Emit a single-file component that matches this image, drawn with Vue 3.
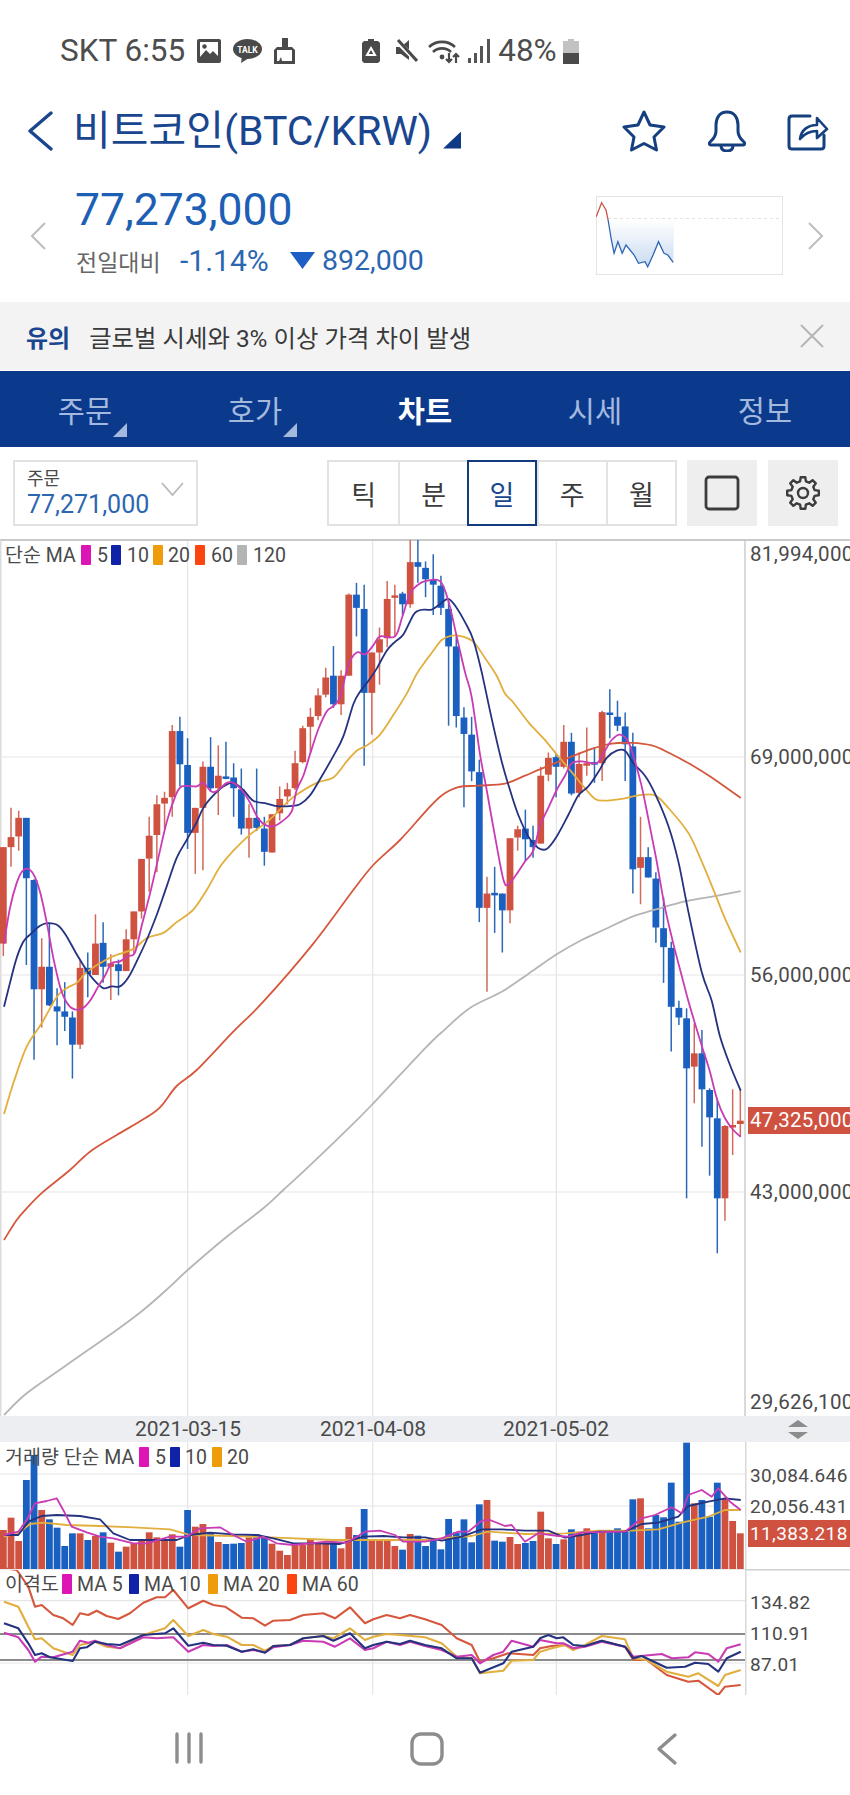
<script setup>
const mainY = (y) => 540 + y / 2.8
const lowY = (y) => 1400 + y / 3

// candles: wick top, body top, body bottom, wick bottom, colour
const candlesA = [
  [860,860,1130,1165,'r'],[750,832,860,915,'r'],[758,778,830,870,'r'],[778,778,947,1190,'b'],[950,952,1258,1455,'b'],
  [1115,1195,1258,1365,'r'],[1075,1195,1303,1305,'b'],[1255,1306,1320,1415,'b'],[1238,1320,1335,1375,'b'],[1320,1337,1413,1508,'b'],
  [1175,1198,1413,1425,'r'],[1155,1198,1215,1280,'b'],[1048,1130,1218,1218,'r'],[1070,1128,1195,1240,'b'],[1160,1185,1195,1288,'r'],
  [1175,1188,1207,1275,'b'],[1090,1118,1207,1207,'r'],[1040,1040,1118,1160,'r'],[893,893,1040,1060,'r'],[775,828,892,985,'r'],
  [715,740,826,930,'r'],[705,722,738,810,'r'],[518,535,720,775,'r'],[495,535,628,690,'b'],[555,630,820,865,'b'],
  [750,750,820,935,'r'],[620,635,750,925,'r'],[552,635,695,705,'b'],[575,660,695,770,'r'],[565,662,668,670,'b'],
  [625,665,695,775,'b'],[640,698,808,825,'b'],[740,778,808,890,'r'],[640,778,806,815,'b'],[775,808,873,912,'b'],
  [768,768,875,875,'r'],[690,725,765,785,'r'],[680,698,718,740,'r'],[590,625,695,700,'r'],[520,527,622,625,'r'],
  [470,495,523,595,'r'],[415,435,493,505,'r'],[358,385,433,440,'r'],[297,380,460,470,'b'],[365,380,460,490,'r'],
  [150,153,380,380,'r'],[120,153,190,270,'b'],[125,193,428,632,'b'],[315,315,428,545,'r'],[245,278,315,405,'r'],
  [115,165,275,300,'r'],[125,155,160,270,'r'],[145,150,180,210,'b'],[0,62,180,190,'r'],[0,62,75,120,'b'],
  [60,78,110,160,'b'],[40,112,125,210,'b'],[100,128,190,210,'b'],[170,193,298,520,'b'],[270,298,493,525,'b'],
  [468,497,543,748,'b'],[495,545,648,675,'b'],[615,650,1030,1070,'b'],[943,990,1030,1265,'r'],[915,988,991,1100,'b'],
  [990,990,1037,1155,'b'],[835,835,1037,1073,'r'],[800,810,833,870,'r'],[755,808,838,900,'b'],[800,840,860,890,'b'],
  [635,660,850,850,'r'],[595,610,657,675,'r'],[598,608,635,720,'b'],[518,565,635,640,'r'],[540,565,710,715,'b'],
  [595,627,708,720,'r'],[525,625,628,660,'r'],[580,622,628,680,'b'],[478,482,625,675,'r'],[418,483,488,555,'b'],
  [450,495,520,535,'b'],[483,522,572,675,'b'],[540,578,922,990,'b'],[775,888,918,1020,'r'],[860,888,945,945,'b'],
  [930,948,1085,1128,'b'],[1000,1087,1140,1240,'b'],[1125,1142,1307,1432,'b'],[1290,1310,1337,1358,'b'],
]
const candlesB = [
  [25,55,205,595,'b'],[70,160,200,310,'r'],[90,160,268,440,'b'],[265,270,352,527,'b'],[295,355,595,760,'b'],
  [375,378,595,662,'r'],[268,375,380,465,'r'],[270,362,372,410,'r'],
]
const bandX = (i) => 3.33 + i * 7.677
const candles = [
  ...candlesA.map((c) => ({ y: c.slice(0, 4).map(mainY), c: c[4] })),
  ...candlesB.map((c) => ({ y: c.slice(0, 4).map((v) => 1000 + v / 3), c: c[4] })),
].map((k, i) => ({
  x: bandX(i),
  wt: k.y[0],
  bt: k.y[1],
  bh: Math.max(k.y[2] - k.y[1], 2.5),
  wb: k.y[3],
  cls: k.c === 'r' ? 'up' : 'down',
}))

// volume bars: top in zoomed coordinates
const volumes = [
  [390,'r'],[353,'r'],[423,'r'],[240,'b'],[165,'b'],[330,'r'],[358,'b'],[383,'b'],[438,'b'],[400,'b'],[400,'r'],[420,'b'],[408,'r'],[397,'b'],
  [428,'r'],[455,'b'],[440,'r'],[430,'r'],[420,'r'],[397,'r'],[412,'r'],[417,'r'],[403,'r'],[440,'b'],[330,'b'],[380,'r'],[372,'r'],[397,'b'],
  [426,'r'],[432,'b'],[431,'b'],[429,'b'],[412,'r'],[403,'b'],[410,'b'],[431,'r'],[452,'r'],[465,'r'],[433,'r'],[435,'r'],[417,'r'],[429,'r'],
  [427,'r'],[425,'b'],[445,'r'],[381,'r'],[405,'b'],[327,'b'],[420,'r'],[420,'r'],[420,'r'],[438,'r'],[449,'b'],[402,'r'],[407,'b'],
  [438,'b'],[420,'b'],[448,'b'],[357,'b'],[397,'b'],[358,'b'],[427,'b'],[313,'b'],[300,'r'],[422,'b'],[425,'b'],[411,'r'],[432,'r'],[429,'b'],
  [423,'b'],[335,'r'],[415,'r'],[432,'b'],[418,'r'],[388,'b'],[395,'r'],[385,'r'],[395,'b'],[390,'r'],[390,'b'],[385,'b'],[395,'b'],[298,'b'],
  [295,'r'],[385,'b'],[345,'b'],[352,'b'],[248,'b'],[365,'b'],[128,'b'],[310,'r'],[300,'b'],[350,'b'],[248,'b'],[297,'r'],[363,'r'],[400,'r'],
].map((v, i) => ({ x: bandX(i) - 3.4, y: lowY(v[0]), h: 1569 - lowY(v[0]), cls: v[1] === 'r' ? 'up' : 'down' }))

const smooth = (p) => {
  let d = `M${p[0][0].toFixed(1)} ${p[0][1].toFixed(1)}`
  for (let i = 0; i < p.length - 1; i++) {
    const a = p[i - 1] || p[i], b = p[i], c = p[i + 1], e = p[i + 2] || c
    const c1x = b[0] + (c[0] - a[0]) / 6, c1y = b[1] + (c[1] - a[1]) / 6
    const c2x = c[0] - (e[0] - b[0]) / 6, c2y = c[1] - (e[1] - b[1]) / 6
    d += `C${c1x.toFixed(1)} ${c1y.toFixed(1)} ${c2x.toFixed(1)} ${c2y.toFixed(1)} ${c[0].toFixed(1)} ${c[1].toFixed(1)}`
  }
  return d
}
const mainPts = (a, xo = 0) => a.map(([x, y]) => [xo + x / 3, mainY(y)])
const lowPts = (a, xo = 0) => a.map(([x, y]) => [xo + x / 3, lowY(y)])
const midPts = (a, xo = 0) => a.map(([x, y]) => [xo + x / 3, 1000 + y / 3])
const poly = (p) => p.map(([x, y]) => `${x.toFixed(1)},${y.toFixed(1)}`).join(' ')

const mainLines = [
  { cls: 'ma120', d: smooth([
    ...midPts([[12,1245],[80,1180],[200,1095],[350,990],[430,930],[510,860],[563,810],[680,710],[790,625],[850,570],[910,515],[1030,400],[1115,315],[1275,145]]),
    ...mainPts([[60,1370],[135,1310],[230,1265],[310,1215],[395,1160],[470,1120],[540,1090],[620,1055],[690,1035],[780,1012],[870,997],[947,983]], 425),
  ]) },
  { cls: 'ma60', d: smooth([
    ...midPts([[12,720],[50,660],[80,625],[130,575],[210,510],[270,455],[350,405],[430,358],[480,322],[530,258],[590,210],[700,95],[790,5]]),
    ...mainPts([[940,1130],[1060,980],[1120,910],[1200,840],[1275,762]]),
    ...mainPts([[50,715],[100,692],[160,688],[240,682],[300,660],[350,640],[430,610],[500,585],[560,570],[620,568],[680,575],[730,595],[800,630],[860,665],[947,722]], 425),
  ]) },
  { cls: 'ma20', d: smooth([
    ...midPts([[12,342],[40,250],[80,140],[125,70]]),
    ...mainPts([[170,1280],[200,1255],[230,1240],[260,1210],[300,1185],[340,1165],[400,1145],[440,1115],[490,1100],[530,1070],[580,1035],[620,980],[660,915],[700,870],[750,825],[800,790],[840,755],[880,720],[950,680],[1000,665],[1040,620],[1070,590],[1100,575],[1140,545],[1180,490],[1220,430],[1250,375],[1276,340]]),
    ...mainPts([[25,310],[50,280],[80,268],[110,270],[145,285],[180,330],[215,380],[240,430],[265,455],[310,510],[355,555],[395,600],[440,650],[480,695],[510,725],[540,730],[590,725],[640,715],[690,715],[730,750],[790,820],[830,900],[870,990],[900,1060],[947,1155]], 425),
  ]) },
  { cls: 'ma10', d: smooth([
    ...mainPts([[12,1307],[30,1240],[50,1170],[70,1125],[90,1105],[120,1080],[145,1073],[175,1080],[200,1110],[230,1160],[260,1205],[285,1235],[310,1255],[335,1250],[360,1250],[385,1225],[410,1180],[440,1120],[470,1050],[500,970],[530,890],[560,840],[590,790],[610,750],[640,715],[670,690],[700,680],[730,700],[760,730],[800,738],[830,745],[870,745],[900,740],[930,715],[960,670],[1000,605],[1030,550],[1060,460],[1080,425],[1105,395],[1130,360],[1160,310],[1185,285],[1210,265],[1240,210],[1255,198],[1276,195]]),
    ...mainPts([[20,195],[45,180],[70,165],[95,190],[120,230],[145,280],[170,370],[200,500],[230,620],[255,700],[280,770],[310,830],[340,862],[365,865],[395,830],[430,770],[460,715],[490,690],[520,650],[545,610],[575,590],[600,590],[625,625],[660,660],[690,710],[730,800],[760,900],[790,1040],[830,1210],[860,1290],[885,1390],[915,1470],[947,1542]], 425),
  ]) },
  { cls: 'ma5', d: smooth([
    ...mainPts([[12,1130],[30,1030],[50,960],[65,930],[80,920],[100,935],[120,985],[140,1070],[160,1170],[180,1250],[200,1295],[220,1313],[245,1313],[270,1290],[295,1250],[315,1220],[335,1185],[360,1180],[385,1165],[405,1155],[425,1080],[450,990],[475,890],[500,790],[525,720],[545,690],[590,690],[610,680],[635,705],[655,700],[680,680],[700,680],[725,700],[750,735],[775,780],[800,800],[825,800],[850,785],[875,760],[890,700],[910,660],[930,600],[955,530],[980,480],[1000,465],[1020,440],[1045,350],[1070,315],[1095,320],[1120,295],[1140,270],[1185,270],[1207,215],[1230,150],[1255,125],[1276,115]]),
    ...mainPts([[45,115],[70,170],[95,270],[120,370],[140,440],[165,600],[185,700],[210,830],[235,950],[250,965],[275,935],[300,900],[325,870],[345,800],[370,750],[395,700],[420,660],[440,625],[470,620],[515,625],[540,590],[560,560],[585,545],[610,565],[630,620],[650,690],[670,780],[695,900],[720,1030],[745,1130],[770,1220],[790,1290],[815,1370],[835,1430],[855,1490],[877,1568],[900,1619],[925,1652],[947,1671]], 425),
  ]) },
]

const volLines = [
  { cls: 'ma20', pts: poly([
    ...lowPts([[12,410],[55,400],[90,372],[130,368],[200,375],[300,378],[400,382],[510,388],[570,405],[700,408],[830,413],[1000,420],[1100,420],[1275,420]]),
    ...lowPts([[80,412],[140,408],[190,395],[300,402],[420,400],[520,392],[620,392],[700,388],[770,368],[850,350],[900,330],[947,330]], 425),
  ]) },
  { cls: 'ma10', pts: poly([
    ...lowPts([[12,405],[55,405],[85,365],[125,348],[170,345],[240,348],[300,358],[340,400],[390,420],[450,420],[530,420],[570,405],[630,398],[700,403],[770,405],[820,415],[880,430],[950,430],[1020,432],[1090,410],[1150,408],[1210,412],[1275,412]]),
    ...lowPts([[50,422],[110,410],[170,388],[230,388],[300,392],[370,392],[420,413],[470,405],[520,395],[600,395],[650,372],[700,368],[760,350],[790,318],[850,305],[900,295],[947,300]], 425),
  ]) },
  { cls: 'ma5', pts: poly([
    ...lowPts([[12,405],[55,395],[80,360],[105,310],[140,303],[170,295],[195,340],[215,380],[260,397],[300,410],[340,415],[400,430],[440,430],[510,410],[560,410],[600,385],[660,382],[700,405],[740,425],[790,410],[830,430],[880,435],[930,430],[980,425],[1040,428],[1095,395],[1140,392],[1185,405],[1210,425],[1275,425]]),
    ...lowPts([[50,415],[100,395],[130,395],[170,362],[195,360],[240,378],[260,375],[300,425],[340,400],[400,408],[430,410],[470,397],[600,395],[650,355],[690,345],[740,322],[770,340],[790,285],[830,270],[860,290],[880,265],[915,305],[947,330]], 425),
  ]) },
]

const devLines = [
  { cls: 'ma60', pts: poly([
    ...lowPts([[12,505],[50,510],[85,560],[105,620],[125,615],[160,645],[190,655],[218,675],[240,640],[265,645],[290,632],[320,648],[355,657],[390,640],[430,608],[470,592],[495,592],[520,570],[565,625],[610,602],[640,615],[675,620],[725,653],[760,655],[795,677],[820,662],[870,660],[910,645],[970,640],[1005,655],[1050,622],[1095,670],[1120,658],[1160,645],[1200,655],[1230,645],[1275,658]]),
    ...lowPts([[50,675],[95,715],[140,735],[165,785],[205,775],[250,760],[325,765],[345,745],[380,738],[420,735],[445,745],[480,738],[530,722],[600,740],[625,780],[665,780],[725,825],[790,845],[820,842],[880,885],[900,860],[947,855]], 425),
  ]) },
  { cls: 'ma20', pts: poly([
    ...lowPts([[12,605],[55,620],[85,680],[105,718],[125,715],[160,745],[218,765],[240,735],[285,725],[320,740],[360,745],[430,705],[495,685],[520,660],[565,708],[610,690],[640,702],[680,710],[725,735],[760,735],[795,752],[820,738],[870,735],[910,715],[970,708],[1000,715],[1050,685],[1095,720],[1120,710],[1160,702],[1200,705],[1275,712]]),
    ...lowPts([[50,730],[95,770],[140,775],[165,820],[235,812],[260,782],[325,780],[345,755],[380,745],[420,735],[445,750],[480,735],[530,708],[600,718],[625,775],[665,780],[725,815],[790,830],[820,820],[880,858],[900,825],[947,810]], 425),
  ]) },
  { cls: 'ma5', pts: poly([
    ...lowPts([[12,698],[55,712],[85,750],[105,785],[125,770],[160,772],[218,755],[240,722],[265,728],[285,722],[320,735],[360,745],[430,712],[470,715],[520,712],[565,755],[610,735],[640,738],[680,735],[725,755],[760,750],[795,757],[820,742],[870,735],[910,722],[970,725],[1005,740],[1050,715],[1095,750],[1120,745],[1160,725],[1200,735],[1230,725],[1275,738]]),
    ...lowPts([[50,750],[95,770],[140,765],[165,790],[205,765],[235,755],[260,722],[325,740],[345,720],[395,730],[415,730],[445,745],[480,740],[530,725],[600,740],[625,770],[710,762],[740,775],[790,772],[810,757],[850,762],[880,785],[905,745],[947,733]], 425),
  ]) },
  { cls: 'ma10', pts: poly([
    ...lowPts([[12,670],[55,685],[85,730],[105,765],[125,760],[150,772],[218,783],[240,745],[260,742],[285,725],[320,732],[360,735],[430,705],[495,700],[520,685],[565,737],[610,728],[640,735],[680,737],[725,755],[760,748],[795,758],[820,738],[870,735],[910,715],[970,708],[1000,722],[1050,700],[1095,745],[1120,735],[1160,725],[1200,732],[1230,722],[1275,735]]),
    ...lowPts([[50,745],[95,775],[140,775],[165,818],[235,790],[260,755],[325,740],[345,715],[370,705],[395,715],[415,712],[445,735],[480,738],[530,722],[600,740],[625,775],[650,768],[725,803],[780,800],[810,788],[850,792],[880,815],[905,775],[947,755]], 425),
  ]) },
]

const legends = [
  { cls: 'sw5', x: 81, y: 545 }, { cls: 'sw10', x: 111, y: 545 }, { cls: 'sw20', x: 153, y: 545 }, { cls: 'sw60', x: 195, y: 545 }, { cls: 'sw120', x: 237, y: 545 },
  { cls: 'sw5', x: 139, y: 1447 }, { cls: 'sw10', x: 170, y: 1447 }, { cls: 'sw20', x: 212, y: 1447 },
  { cls: 'sw5', x: 62, y: 1574 }, { cls: 'sw10', x: 129, y: 1574 }, { cls: 'sw20', x: 208, y: 1574 }, { cls: 'sw60', x: 287, y: 1574 },
]
const legendText = [
  { t: '단순 MA', x: 5, y: 555 }, { t: '5', x: 97, y: 555 }, { t: '10', x: 127, y: 555 }, { t: '20', x: 168, y: 555 }, { t: '60', x: 211, y: 555 }, { t: '120', x: 253, y: 555 },
  { t: '거래량 단순 MA', x: 5, y: 1457 }, { t: '5', x: 155, y: 1457 }, { t: '10', x: 185, y: 1457 }, { t: '20', x: 227, y: 1457 },
  { t: '이격도', x: 5, y: 1584 }, { t: 'MA 5', x: 77, y: 1584 }, { t: 'MA 10', x: 144, y: 1584 }, { t: 'MA 20', x: 223, y: 1584 }, { t: 'MA 60', x: 302, y: 1584 },
]
const axisMain = [
  { t: '81,994,000', y: 554 }, { t: '69,000,000', y: 757 }, { t: '56,000,000', y: 975 }, { t: '43,000,000', y: 1192 }, { t: '29,626,100', y: 1402 },
]
const axisLow = [
  { t: '30,084.646', y: 1475 }, { t: '20,056.431', y: 1506 }, { t: '134.82', y: 1602 }, { t: '110.91', y: 1633 }, { t: '87.01', y: 1664 },
]
const dates = [{ t: '2021-03-15', x: 188 }, { t: '2021-04-08', x: 373 }, { t: '2021-05-02', x: 556 }]
const tabs = [
  { t: '주문', mark: true }, { t: '호가', mark: true }, { t: '차트', active: true }, { t: '시세' }, { t: '정보' },
]
const periods = [{ t: '틱' }, { t: '분' }, { t: '일', active: true }, { t: '주' }, { t: '월' }]

// mini chart
const miniX = (x) => x / 1.845 - 596
const miniY = (y) => y / 3 - 196
const miniRedRaw = [[1100,650],[1110,608],[1118,630],[1122,660]]
const miniBlueRaw = [[1122,660],[1128,720],[1133,760],[1140,725],[1148,760],[1155,735],[1170,765],[1178,790],[1190,785],[1195,800],[1205,765],[1215,725],[1225,760],[1232,765],[1242,787]]
const mm = (a) => a.map(([x, y]) => [miniX(x), miniY(y)])
const miniRed = poly(mm(miniRedRaw))
const miniBlue = poly(mm(miniBlueRaw))
const miniArea = poly(mm([...miniBlueRaw, [1244, 660]]))

// gear outline with eight teeth
const gearPath = (() => {
  const n = 8, ro = 16, ri = 12, c = 18
  const pts = []
  for (let i = 0; i < n; i++) {
    const a = (i / n) * Math.PI * 2 - Math.PI / 2
    const s = Math.PI / n
    const at = (r, o) => [c + r * Math.cos(a + o), c + r * Math.sin(a + o)]
    pts.push(at(ri, -s * 0.62), at(ro, -s * 0.36), at(ro, s * 0.36), at(ri, s * 0.62))
  }
  return poly(pts)
})()
</script>

<template>
  <div class="page">
    <div class="status">
      <div class="status-left">
        <span class="status-text">SKT 6:55</span>
        <svg width="24" height="24" viewBox="0 0 24 24"><rect width="24" height="24" rx="2" fill="#4a4a4a" /><rect x="3" y="3" width="18" height="15" fill="#fff" /><circle cx="7.5" cy="7.5" r="2.2" fill="#4a4a4a" /><path d="M3 18l6-7 4 4 3-3 5 5v1z" fill="#4a4a4a" /></svg>
        <svg width="29" height="24" viewBox="0 0 29 24"><ellipse cx="14.5" cy="10" rx="14.5" ry="10" fill="#4a4a4a" /><path d="M9 17l-1 7 8-5z" fill="#4a4a4a" /><text x="14.5" y="13.5" class="talk">TALK</text></svg>
        <svg width="21" height="26" viewBox="0 0 21 26"><path d="M8 0h6v9h4l3 3v14H0V12l3-3h5z" fill="#4a4a4a" /><path d="M3 12h15v11H8l-1-4-2 4H3z" fill="#fff" /></svg>
      </div>
      <div class="status-right">
        <svg width="18" height="24" viewBox="0 0 18 24"><path d="M6 0h6v2h4l2 2v18l-2 2H2l-2-2V4l2-2h4z" fill="#4a4a4a" /><path d="M9 9l4 7H5z" fill="none" stroke="#fff" stroke-width="2" /></svg>
        <svg class="ml15" width="23" height="24" viewBox="0 0 23 24"><path d="M1 8h5l8-7v20l-8-6H1z" fill="#4a4a4a" /><path d="M2 2l20 20" stroke="#fff" stroke-width="5" /><path d="M3 1l19 21" stroke="#4a4a4a" stroke-width="3" /></svg>
        <svg class="ml10" width="32" height="25" viewBox="0 0 32 25"><g fill="none" stroke="#4a4a4a" stroke-width="2.6"><path d="M1 8a19 19 0 0 1 26 0" /><path d="M5 13a13 13 0 0 1 18 0" /></g><circle cx="14" cy="18" r="2.4" fill="#4a4a4a" /><path d="M21 14v9m-3-3l3 3 3-3M28 24v-9m-3 3l3-3 3 3" fill="none" stroke="#4a4a4a" stroke-width="2.2" /></svg>
        <svg class="ml8" width="22" height="24" viewBox="0 0 22 24"><g fill="#555"><rect x="0" y="19" width="3" height="5" /><rect x="6" y="14" width="3" height="10" /><rect x="12" y="7" width="3" height="17" /><rect x="19" y="0" width="3" height="24" /></g></svg>
        <span class="status-text ml8">48%</span>
        <svg class="ml6" width="16" height="25" viewBox="0 0 16 25"><path d="M5 0h6v2h5v12H0V2h5z" fill="#c2c2c2" /><rect y="14" width="16" height="11" fill="#4a4a4a" /></svg>
      </div>
    </div>

    <header class="title-row">
      <svg class="back" width="26" height="40" viewBox="0 0 26 40"><path d="M24 2L3 20l21 18" fill="none" stroke="#1a4690" stroke-width="3.4" stroke-linejoin="round" stroke-linecap="round" /></svg>
      <h1 class="title">비트코인(BTC/KRW)</h1>
      <span class="title-mark"></span>
      <div class="title-icons">
        <svg width="44" height="42" viewBox="0 0 44 42"><path d="M22 2l6 13 14 2-10 10 2.5 13L22 33.500 9.500 40 12 27 2 17l14-2z" fill="none" stroke="#15407f" stroke-width="3" stroke-linejoin="round" /></svg>
        <svg class="bell" width="40" height="42" viewBox="0 0 40 42"><path d="M20 2c-7.500 0-11 6-11 13v6c0 6-4 9-6 11-1 1-1 3 1 3h32c2 0 2-2 1-3-2-2-6-5-6-11v-6c0-7-3.500-13-11-13z" fill="none" stroke="#15407f" stroke-width="3" stroke-linejoin="round" /><path d="M14 35c0 4 2.500 6 6 6s6-2 6-6" fill="none" stroke="#15407f" stroke-width="3" /></svg>
        <svg width="42" height="40" viewBox="0 0 42 40"><path d="M23 5H5q-3 0-3 3v27q0 3 3 3h29q3 0 3-3V24" fill="none" stroke="#15407f" stroke-width="3" stroke-linecap="round" /><path d="M13 28c1-9 8-14 17-14V7l10 11-10 9v-7c-7 0-12 2-17 8z" fill="none" stroke="#15407f" stroke-width="2.600" stroke-linejoin="round" /></svg>
      </div>
    </header>

    <section class="price-row">
      <svg width="16" height="28" viewBox="0 0 16 28"><path d="M15 1L2 14l13 13" fill="none" stroke="#bdbdbd" stroke-width="2" /></svg>
      <div class="price-col">
        <div class="price">77,273,000</div>
        <div class="price-sub">
          <span class="sub-label">전일대비</span>
          <span class="sub-rate">-1.14%</span>
          <span class="sub-tri"></span>
          <span class="sub-val">892,000</span>
        </div>
      </div>
      <svg class="mini" width="187" height="79" viewBox="0 0 187 79">
        <defs><linearGradient id="miniFill" x1="0" y1="0" x2="0" y2="1"><stop offset="0" stop-color="#ffffff" /><stop offset="1" stop-color="#c9dbf2" /></linearGradient></defs>
        <rect x="0.5" y="0.5" width="186" height="78" fill="#fff" stroke="#e4e4e4" />
        <line x1="12" y1="22.500" x2="186" y2="22.500" stroke="#e2e2e2" stroke-dasharray="3 3" />
        <polygon :points="miniArea" fill="url(#miniFill)" />
        <polyline :points="miniRed" fill="none" stroke="#c9574a" stroke-width="1.300" />
        <polyline :points="miniBlue" fill="none" stroke="#2f66b3" stroke-width="1.300" />
      </svg>
      <svg width="16" height="28" viewBox="0 0 16 28"><path d="M1 1l13 13L1 27" fill="none" stroke="#bdbdbd" stroke-width="2" /></svg>
    </section>

    <div class="banner">
      <span class="banner-tag">유의</span>
      <span class="banner-text">글로벌 시세와 3% 이상 가격 차이 발생</span>
      <svg class="banner-close" width="24" height="24" viewBox="0 0 24 24"><path d="M1 1l22 22M23 1L1 23" stroke="#b5b5b5" stroke-width="2" /></svg>
    </div>

    <nav class="tabs">
      <div v-for="tab in tabs" :key="tab.t" class="tab" :class="{ active: tab.active, marked: tab.mark }">{{ tab.t }}</div>
    </nav>

    <div class="toolbar">
      <div class="select">
        <div class="select-text">
          <span class="select-label">주문</span>
          <span class="select-value">77,271,000</span>
        </div>
        <svg width="23" height="14" viewBox="0 0 23 14"><path d="M1 1l10.500 12L22 1" fill="none" stroke="#b9b9b9" stroke-width="1.800" /></svg>
      </div>
      <div class="periods">
        <div v-for="p in periods" :key="p.t" class="period" :class="{ active: p.active }">{{ p.t }}</div>
      </div>
      <div class="tool-btn"><svg width="36" height="36" viewBox="0 0 36 36"><rect x="2" y="2" width="32" height="32" rx="3" fill="none" stroke="#3c3c3c" stroke-width="2.800" /></svg></div>
      <div class="tool-btn"><svg width="36" height="36" viewBox="0 0 36 36"><polygon :points="gearPath" fill="none" stroke="#3c3c3c" stroke-width="2.400" stroke-linejoin="round" /><circle cx="18" cy="18" r="5" fill="none" stroke="#3c3c3c" stroke-width="2.400" /></svg></div>
    </div>

    <svg class="chart" width="850" height="1156" viewBox="0 539 850 1156">
      <rect x="0" y="539" width="850" height="2" fill="#c9c9c9" />
      <rect x="0" y="540" width="1.500" height="876" fill="#dcdcdc" />
      <g class="grid">
        <line v-for="y in [757, 975, 1192, 1474, 1506, 1600.7, 1663]" :key="y" x1="0" x2="745" :y1="y" :y2="y" />
        <line v-for="x in [187.7, 372.700, 556.300]" :key="x" :x1="x" :x2="x" y1="541" y2="1695" />
      </g>

      <g v-for="(k, i) in candles" :key="i" :class="k.cls">
        <line class="wick" :x1="k.x" :x2="k.x" :y1="k.wt" :y2="k.wb" />
        <rect :x="k.x - 3.4" :y="k.bt" width="6.800" :height="k.bh" />
      </g>
      <path v-for="l in mainLines" :key="l.cls" :class="['line', l.cls]" :d="l.d" />

      <rect x="0" y="1416" width="850" height="26" fill="#eceef2" />
      <text v-for="d in dates" :key="d.t" class="date" :x="d.x" y="1429">{{ d.t }}</text>
      <path d="M798 1420l-10 7h20zM798 1439l-10-7h20z" fill="#8c8c8c" />

      <g v-for="(v, i) in volumes" :key="'v' + i" :class="v.cls"><rect :x="v.x" :y="v.y" width="6.800" :height="v.h" /></g>
      <polyline v-for="l in volLines" :key="'vl' + l.cls" :class="['line', l.cls]" :points="l.pts" />

      <rect x="0" y="1633" width="745" height="2" fill="#8b8b8b" />
      <rect x="0" y="1659" width="745" height="2" fill="#8b8b8b" />
      <polyline v-for="l in devLines" :key="'dl' + l.cls" :class="['line', 'thick', l.cls]" :points="l.pts" />

      <rect x="744" y="541" width="2" height="875" fill="#d9d9d9" />
      <rect x="745" y="1442" width="1.500" height="253" fill="#d9d9d9" />
      <rect x="745" y="1569" width="105" height="1.500" fill="#d0d0d0" />
      <rect x="0" y="1569" width="745" height="1" fill="#e9e9e9" />

      <rect v-for="(s, i) in legends" :key="'s' + i" :class="s.cls" :x="s.x" :y="s.y" width="10" height="20" rx="1" />
      <text v-for="(t, i) in legendText" :key="'t' + i" class="label" :x="t.x" :y="t.y">{{ t.t }}</text>
      <text v-for="a in axisMain" :key="a.t" class="label axis big" x="750" :y="a.y">{{ a.t }}</text>
      <text v-for="a in axisLow" :key="a.t" class="label axis" x="750" :y="a.y">{{ a.t }}</text>

      <rect x="748" y="1107" width="102" height="27" fill="#cf5140" />
      <text class="label axis big light" x="750" y="1120">47,325,000</text>
      <rect x="748" y="1520" width="102" height="27" fill="#cf5140" />
      <text class="label axis light" x="750" y="1533">11,383.218</text>
    </svg>

    <div class="softkeys">
      <svg width="30" height="32" viewBox="0 0 30 32"><path d="M3 2v28M15 2v28M27 2v28" stroke="#8d8d8d" stroke-width="3.400" stroke-linecap="round" /></svg>
      <svg width="34" height="34" viewBox="0 0 34 34"><rect x="2" y="2" width="30" height="30" rx="9" fill="none" stroke="#8d8d8d" stroke-width="3.400" /></svg>
      <svg width="22" height="34" viewBox="0 0 22 34"><path d="M19 3L3 17l16 14" fill="none" stroke="#8d8d8d" stroke-width="3.400" stroke-linecap="round" stroke-linejoin="round" /></svg>
    </div>
  </div>
</template>

<style>
html, body { margin: 0; background: #fff; }
</style>

<style scoped>
.page {
  width: 850px;
  height: 1795px;
  overflow: hidden;
  background: #fff;
  font-family: Roboto, "Noto Sans CJK KR", sans-serif;
}
.status {
  height: 90px;
  box-sizing: border-box;
  padding: 37px 0 0 60px;
  display: flex;
  align-items: flex-start;
  gap: 67px;
}
.status-left, .status-right { display: flex; align-items: center; height: 28px; }
.status-left { gap: 12px; }
.status-text { font-size: 31.5px; line-height: 28px; color: #4d4d4d; white-space: nowrap; }
.talk { font: 700 8.5px Roboto, sans-serif; fill: #fff; text-anchor: middle; }
.ml6 { margin-left: 6px; }
.ml8 { margin-left: 8px; }
.ml10 { margin-left: 10px; }
.ml15 { margin-left: 15px; }

.title-row {
  height: 82px;
  box-sizing: border-box;
  padding: 0 21px 0 27px;
  display: flex;
  align-items: center;
}
.title {
  margin: 0 0 0 20px;
  font-size: 41px;
  font-weight: 400;
  line-height: 50px;
  color: #1a4690;
  white-space: nowrap;
}
.title-mark {
  width: 18px;
  height: 17px;
  margin: 18px 0 0 11px;
  background: #0f3b86;
  clip-path: polygon(100% 0, 100% 100%, 0 100%);
}
.title-icons { margin-left: auto; display: flex; align-items: center; gap: 40px; }
.bell { margin-left: 1px; }

.price-row {
  height: 128px;
  box-sizing: border-box;
  padding: 0 26px 0 30px;
  display: flex;
  align-items: center;
}
.price-col { margin: 0 0 6px 29px; display: flex; flex-direction: column; gap: 11px; }
.price { font-size: 44.5px; line-height: 44px; color: #1d5fb4; font-weight: 400; }
.price-sub { display: flex; align-items: center; height: 36px; margin-left: 1px; font-size: 28.5px; color: #2b66b1; }
.sub-label { font-size: 23px; color: #666; width: 85px; white-space: nowrap; }
.sub-rate { margin-left: 19px; width: 87px; font-size: 30px; }
.sub-tri {
  margin-left: 23px;
  width: 25px;
  height: 17px;
  background: #1d5fc4;
  clip-path: polygon(0 0, 100% 0, 50% 100%);
}
.sub-val { margin-left: 7px; }
.mini { margin: -2px 25px 0 auto; }

.banner {
  height: 68px;
  margin-top: 2px;
  box-sizing: border-box;
  padding: 0 26px;
  display: flex;
  align-items: center;
  background: #f3f3f3;
  font-size: 24.4px;
  color: #3a3a3a;
}
.banner-tag { color: #1a4690; font-weight: 700; font-size: 24px; }
.banner-text { margin-left: 19px; }
.banner-close { margin-left: auto; }

.tabs {
  height: 76px;
  margin-top: 1px;
  background: #0b398c;
  display: grid;
  grid-template-columns: repeat(5, 170px);
}
.tab {
  position: relative;
  display: flex;
  align-items: center;
  justify-content: center;
  font-size: 29.5px;
  color: #a3b9de;
}
.tab.active { color: #fff; font-weight: 700; }
.tab.marked::after {
  content: "";
  position: absolute;
  right: 43px;
  bottom: 10px;
  width: 14px;
  height: 14px;
  background: #a3b9de;
  clip-path: polygon(100% 0, 100% 100%, 0 100%);
}

.toolbar {
  height: 92px;
  box-sizing: border-box;
  padding: 13px 12px 13px 13px;
  display: flex;
  gap: 11px;
}
.select {
  width: 185px;
  margin-right: auto;
  box-sizing: border-box;
  padding: 0 12px;
  border: 2px solid #e2e2e2;
  display: flex;
  align-items: center;
  justify-content: space-between;
}
.select-text { display: flex; flex-direction: column; }
.select-label { font-size: 18px; line-height: 24px; color: #4a4a4a; }
.select-value { font-size: 25px; line-height: 28px; color: #2b66b1; }
.select svg { margin-top: -8px; }
.periods {
  width: 350px;
  margin-right: -1px;
  box-sizing: border-box;
  border: 2px solid #e2e2e2;
  display: grid;
  grid-template-columns: 1fr 1fr 1fr 1fr 1fr;
}
.period {
  display: flex;
  align-items: center;
  justify-content: center;
  font-size: 27px;
  color: #3c3c3c;
  border-left: 2px solid #e2e2e2;
}
.period:first-child { border-left: 0; }
.period.active { margin: -2px 0; border: 2px solid #123a7d; color: #1a4690; }
.tool-btn {
  width: 70px;
  background: #eeeeee;
  display: flex;
  align-items: center;
  justify-content: center;
}

.chart { display: block; font-family: Roboto, "Noto Sans CJK KR", sans-serif; }
.grid line { stroke: #e5e5e5; stroke-width: 1.2; }
.up rect { fill: #cf5140; }
.down rect { fill: #1a60c1; }
.wick { stroke-width: 1.5; }
.up .wick { stroke: #d2695b; }
.down .wick { stroke: #2b69b6; }
.line { fill: none; stroke-width: 1.8; stroke-linejoin: round; }
.line.thick { stroke-width: 2.1; }
.line.ma5 { stroke: #c93bb4; }
.line.ma10 { stroke: #25327f; }
.line.ma20 { stroke: #e2ae3e; }
.line.ma60 { stroke: #d5583d; }
.line.ma120 { stroke: #b5b5b5; }
.sw5 { fill: #de15b5; }
.sw10 { fill: #0f22a8; }
.sw20 { fill: #ef9c0a; }
.sw60 { fill: #fb4410; }
.sw120 { fill: #b4b4b4; }
.label { font-size: 19.5px; fill: #4a4a4a; dominant-baseline: central; }
.axis { font-size: 19px; letter-spacing: 0.35px; }
.axis.big { font-size: 20.5px; }
.light { fill: #fff; }
.date { font-size: 21px; fill: #4a4a4a; text-anchor: middle; dominant-baseline: central; }

.softkeys {
  height: 100px;
  box-sizing: border-box;
  padding: 37px 0 0 69px;
  display: grid;
  grid-template-columns: 240px 236px 244px;
  justify-items: center;
  align-items: start;
}
</style>
